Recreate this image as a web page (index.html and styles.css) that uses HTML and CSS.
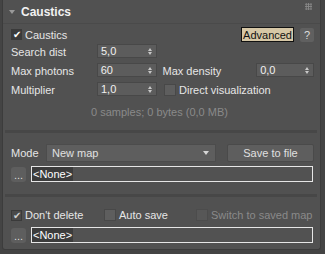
FILE: index.html
```html
<html>
<head>
<title>Caustics</title>
<link rel="stylesheet" href="styles.css">
</head>
<body>
<div class="panel">
  <div class="head">
    <span class="tri"></span>
    <span class="title">Caustics</span>
    <span class="grip"></span>
  </div>

  <div class="row r-top">
    <label class="chk"><span class="box on">&#10004;</span>Caustics</label>
    <span class="grow"></span>
    <span class="adv">Advanced</span>
    <span class="help">?</span>
  </div>

  <div class="row">
    <span class="lbl">Search dist</span>
    <span class="spin">5,0<i></i></span>
  </div>

  <div class="row">
    <span class="lbl">Max photons</span>
    <span class="spin">60<i></i></span>
    <span class="lbl2">Max density</span>
    <span class="spin sm">0,0<i></i></span>
  </div>

  <div class="row">
    <span class="lbl">Multiplier</span>
    <span class="spin">1,0<i></i></span>
    <label class="chk dv"><span class="box"></span>Direct visualization</label>
  </div>

  <div class="info">0 samples; 0 bytes (0,0 MB)</div>

  <div class="sep"></div>

  <div class="row r-mode">
    <span class="lbl mode">Mode</span>
    <span class="drop">New map<i></i></span>
    <span class="btn">Save to file</span>
  </div>

  <div class="row r-file">
    <span class="dots">...</span>
    <span class="field"><span class="sel">&lt;None&gt;</span></span>
  </div>

  <div class="sep s2"></div>

  <div class="row r-opts">
    <label class="chk keep"><span class="box on dim">&#10004;</span>Don't delete</label>
    <label class="chk auto"><span class="box"></span>Auto save</label>
    <label class="chk off"><span class="box"></span>Switch to saved map</label>
  </div>

  <div class="row r-file last">
    <span class="dots">...</span>
    <span class="field"><span class="sel">&lt;None&gt;</span></span>
  </div>
</div>
</body>
</html>
```

FILE: styles.css
```css
body {margin:0; background-color:#444444; font-family:"Liberation Sans", Arial, sans-serif; font-size:11px; color:#e6e6e6; width:325px; height:254px; overflow:hidden}
.panel {margin:0 4px 0 2px; height:250px; background-color:#515151; border:1px solid #3c3c3c; border-top:none; border-radius:0 0 3px 3px; box-sizing:border-box; padding:0 6px 0 8px}
.head {display:flex; align-items:center; height:23px; margin:0 -6px 0 -8px; padding:0 6px 0 8px; border-bottom:1px solid #4a4a4a}
.tri {width:0; height:0; border-left:3px solid transparent; border-right:3px solid transparent; border-top:4px solid #9a9a9a; margin:0 6px 0 -2px}
.title {font-weight:bold; font-size:12px; color:#f2f2f2; flex:1}
.grip {width:7px; height:7px; background-image:radial-gradient(circle, #8a8a8a 0.8px, transparent 1px); background-size:2.4px 2.4px; margin:-10px 2px 0 0}
.row {display:flex; align-items:center}
.grow {flex:1}
.r-top {height:15px; margin-top:3px}
.lbl {width:86px}
.lbl2 {width:94px; margin-left:6px}
.spin {display:flex; align-items:center; width:60px; height:14px; margin:2px 0 3px; background-color:#5c5c5c; border:1px solid #484848; box-sizing:border-box; padding-left:3px; color:#f0f0f0}
.spin.sm {width:58px}
.spin i {margin-left:auto; margin-right:3px; width:5px; height:7px; position:relative}
.spin i:before {content:""; position:absolute; left:0; top:0; border-left:2.5px solid transparent; border-right:2.5px solid transparent; border-bottom:3px solid #c8c8c8}
.spin i:after {content:""; position:absolute; left:0; bottom:0; border-left:2.5px solid transparent; border-right:2.5px solid transparent; border-top:3px solid #c8c8c8}
.chk {display:flex; align-items:center}
.box {display:inline-block; width:11px; height:11px; background-color:#5e5e5e; border:1px solid #484848; box-sizing:border-box; margin-right:3px; font-size:10px; line-height:10px; text-align:center; color:#ffffff}
.box.on {background-color:#3a3a3a; border-color:#3a3a3a}
.box.dim {color:#cfcfcf; background-color:#4a4a4a}
.adv {background-color:#d6c7a6; color:#111111; border:1px solid #111111; padding:0 1px; height:15px; line-height:14px; box-sizing:border-box; font-size:11px}
.help {width:14px; height:14px; margin-left:6px; margin-right:0; background-color:#606060; border-radius:2px; text-align:center; line-height:14px; color:#dddddd}
.dv {margin-left:7px}
.dv .box {width:12px; height:12px}
.info {text-align:center; color:#8a8a8a; height:17px; line-height:17px; margin-top:5px; padding-right:6px}
.sep {height:3px; background-color:#474747; margin:9px -3px 0 -6px}
.s2 {margin-top:12px}
.r-mode {margin-top:11px; height:18px}
.mode {width:35px}
.drop {display:flex; align-items:center; width:170px; height:18px; background-color:#5e5e5e; border:1px solid #4c4c4c; box-sizing:border-box; padding-left:5px; color:#e0e0e0}
.drop i {margin-left:auto; margin-right:6px; border-left:3px solid transparent; border-right:3px solid transparent; border-top:4px solid #d6d6d6}
.btn {width:87px; height:18px; margin-left:11px; background-color:#5e5e5e; border:1px solid #4a4a4a; border-radius:2px; box-sizing:border-box; text-align:center; line-height:16px; color:#e0e0e0}
.r-file {margin-top:4px; height:16px; padding-right:1px}
.r-file.last {margin-top:5px}
.dots {width:15px; height:15px; background-color:#5e5e5e; border-radius:3px; text-align:center; line-height:17px; color:#dddddd}
.field {flex:1; height:16px; margin-left:5px; border:1px solid #e6e6e6; box-sizing:border-box; display:flex; align-items:center; background-color:#525252}
.sel {background-color:#3c3c3c; color:#ffffff; padding:0 1px; height:14px; line-height:14px; font-size:11px}
.r-opts {margin-top:11px; height:14px}
.keep {width:93px}
.auto {width:92px}
.auto .box {width:12px; height:12px}
.off {color:#8a8a8a}
.off .box {width:12px; height:12px; background-color:#575757; border-color:#4c4c4c}
```
